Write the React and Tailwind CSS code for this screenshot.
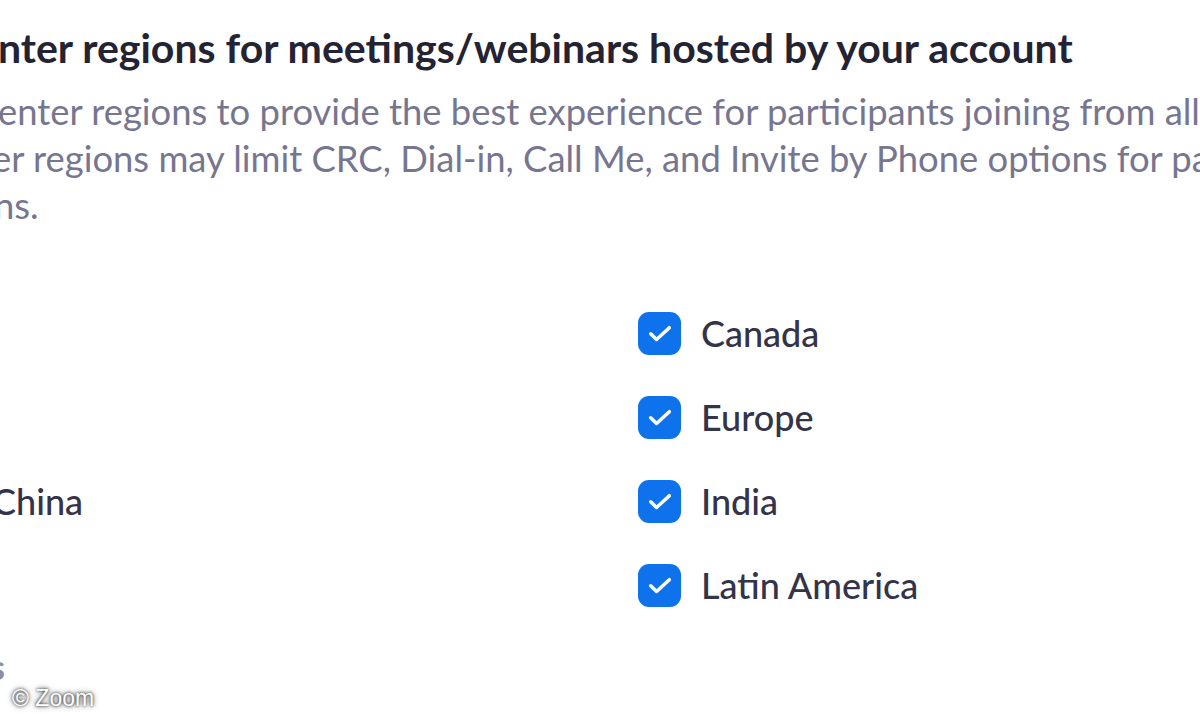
const regions = [
  { left: "", right: "Canada" },
  { left: "", right: "Europe" },
  { left: "China", right: "India" },
  { left: "", right: "Latin America" },
];

const CheckBox = () => (
  <div className="w-[43px] h-[43px] rounded-[11px] bg-[#0e72ed] flex items-center justify-center shrink-0">
    <svg width="32" height="32" viewBox="0 0 24 24" fill="none">
      <path d="M5 12.6l4.4 4.3L19 8" stroke="white" strokeWidth="2.6" strokeLinecap="round" strokeLinejoin="round" />
    </svg>
  </div>
);

const App = () => {
  return (
    <div className="relative w-[1200px] h-[720px] overflow-hidden bg-white font-['Lato',sans-serif]">
      <div className="pt-[23px]">
        <h1 className="-ml-[2px] whitespace-nowrap text-[41px] leading-[49px] font-bold text-[#232333]">
          nter regions for meetings/webinars hosted by your account
        </h1>
        <div className="mt-[16px] text-[36.4px] leading-[47px] text-[#767690] whitespace-nowrap">
          <p className="-ml-[2px]">enter regions to provide the best experience for participants joining from all regions.</p>
          <p className="-ml-[8px]">er regions may limit CRC, Dial-in, Call Me, and Invite by Phone options for participants joining from these</p>
          <p className="-ml-[6px]">ns.</p>
        </div>
      </div>

      <div className="mt-[62px] grid grid-cols-[638px_1fr]">
        {regions.map((r, i) => (
          <div key={i} className="contents">
            <div className="h-[84px] flex items-center -ml-[8px] text-[36px] font-medium text-[#33334a]">
              {r.left}
            </div>
            <div className="h-[84px] flex items-center gap-[20px]">
              <CheckBox />
              <span className="text-[36px] font-medium text-[#33334a]">{r.right}</span>
            </div>
          </div>
        ))}
      </div>

      <p className="-ml-[10px] mt-[20px] text-[34px] leading-[40px] font-bold text-[#8d8da3]">s</p>

      <div className="absolute left-[12px] bottom-[10px] text-[23px] leading-[24px] text-white font-['Liberation_Sans',sans-serif] [text-shadow:0_0_3px_rgba(0,0,0,0.9),0_0_6px_rgba(0,0,0,0.6)]">
        © Zoom
      </div>
    </div>
  );
};

export default App;
